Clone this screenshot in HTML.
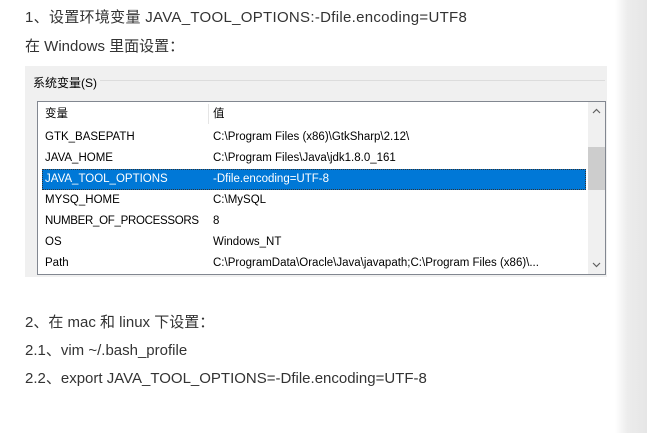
<!DOCTYPE html>
<html><head><meta charset="utf-8"><style>
body{margin:0;width:647px;height:433px;overflow:hidden;background:#fff;font-family:"Liberation Sans","Noto Sans CJK SC",sans-serif;position:relative;color:#333}
.t{position:absolute;left:25px;font-size:15px;white-space:nowrap;line-height:20px}
.edge{position:absolute;right:0;top:0;width:32px;height:433px;background:linear-gradient(to right,#fff,#ececec 40%,#e6e6e6)}
.win{position:absolute;left:25px;top:66px;width:582px;height:211px;background:#f0f0f0;font-size:11.5px;color:#000}
.grp{position:absolute;left:8px;top:14px;width:572px;border-top:1px solid #dcdcdc}
.lbl{position:absolute;left:8px;top:8px;background:#f0f0f0;padding-right:3px;font-size:12px}
.list{position:absolute;left:12px;top:35px;width:567px;height:172px;background:#fff;border:1px solid #828790}
.r{position:absolute;left:4px;width:544px;height:21px;line-height:21px}
.r span{position:absolute;left:3px}
.r span+span{left:171px}
.sel{background:#0078d7;color:#fff;outline:1px dotted #333;outline-offset:-1px}
.sb{position:absolute;right:0;top:0;width:17px;height:172px;background:#f0f0f0}
.th{position:absolute;left:0;top:45px;width:17px;height:43px;background:#cdcdcd}
</style></head><body>
<div class="t" style="top:8px;letter-spacing:0.3px">1、设置环境变量 JAVA_TOOL_OPTIONS:-Dfile.encoding=UTF8</div>
<div class="t" style="top:37px">在 Windows 里面设置：</div>
<div class="win">
<div class="grp"></div><div class="lbl">系统变量(S)</div>
<div class="list">
<div class="r" style="top:2px"><span>变量</span><span>值</span></div>
<div style="position:absolute;left:170px;top:2px;width:1px;height:20px;background:#e5e5e5"></div>
<div class="r" style="top:25px"><span>GTK_BASEPATH</span><span>C:\Program Files (x86)\GtkSharp\2.12\</span></div>
<div class="r" style="top:46px"><span>JAVA_HOME</span><span>C:\Program Files\Java\jdk1.8.0_161</span></div>
<div class="r sel" style="top:67px"><span>JAVA_TOOL_OPTIONS</span><span>-Dfile.encoding=UTF-8</span></div>
<div class="r" style="top:88px"><span>MYSQ_HOME</span><span>C:\MySQL</span></div>
<div class="r" style="top:109px"><span style="letter-spacing:-0.3px">NUMBER_OF_PROCESSORS</span><span>8</span></div>
<div class="r" style="top:130px"><span>OS</span><span>Windows_NT</span></div>
<div class="r" style="top:151px"><span>Path</span><span>C:\ProgramData\Oracle\Java\javapath;C:\Program Files (x86)\...</span></div>
<div class="sb"><div class="th"></div>
<svg style="position:absolute;left:4px;top:6px" width="9" height="6"><path d="M1 5L4.5 1.5L8 5" fill="none" stroke="#606060" stroke-width="1.2"/></svg>
<svg style="position:absolute;left:4px;bottom:6px" width="9" height="6"><path d="M1 1L4.5 4.5L8 1" fill="none" stroke="#606060" stroke-width="1.2"/></svg>
</div>
</div></div>
<div class="t" style="top:313px">2、在 mac 和 linux 下设置：</div>
<div class="t" style="top:341px">2.1、vim ~/.bash_profile</div>
<div class="t" style="top:369px">2.2、export JAVA_TOOL_OPTIONS=-Dfile.encoding=UTF-8</div>
<div class="edge"></div>
</body></html>
